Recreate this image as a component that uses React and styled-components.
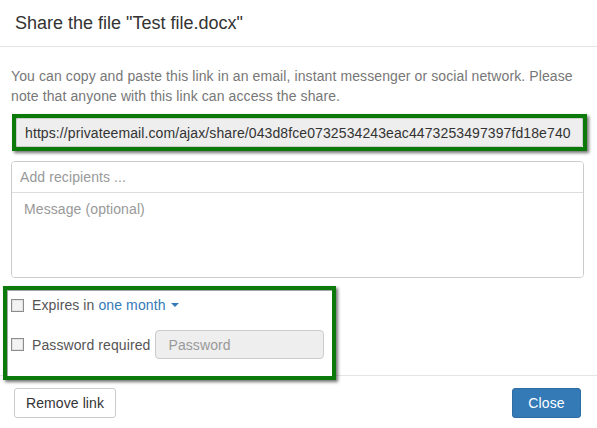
import styled, { createGlobalStyle } from 'styled-components'

const GlobalStyle = createGlobalStyle`
    html, body {
        margin: 0;
        padding: 0;
        background: #fff;
    }
    body {
        font-family: "Liberation Sans", Arial, sans-serif;
        font-size: 14px;
        color: #333;
    }
    * { box-sizing: border-box; }
`

const Modal = styled.div`
    width: 597px;
    height: 428px;
    background: #fff;
    overflow: hidden;
`

const Header = styled.div`
    padding: 10px 15px;
    border-bottom: 1px solid #e5e5e5;
`

const Title = styled.h4`
    margin: 0;
    font-size: 18px;
    font-weight: normal;
    line-height: 26px;
    color: #333;
`

const Body = styled.div`
    padding: 19px 13px 0 11px;
`

const Hint = styled.p`
    margin: 0 0 8px;
    font-size: 14px;
    line-height: 20px;
    letter-spacing: 0.1px;
    color: #777;
`

const Highlight = styled.div`
    position: relative;
    z-index: 1;
    background: #fff;
    border: 4px solid #0b7a0b;
    box-shadow: inset 1px 1px 0 rgba(0, 0, 0, 0.35), 2px 2px 3px rgba(0, 0, 0, 0.55);
    width: ${props => props.$width};
    margin: ${props => props.$margin};
    padding: ${props => props.$padding};
`

const LinkField = styled.input`
    display: block;
    width: 100%;
    height: 29px;
    padding: 0 8px;
    font: inherit;
    font-size: 14px;
    letter-spacing: 0.1px;
    color: #333;
    background: #eee;
    border: 1px solid #ccc;
    border-radius: 2px;
    outline: none;
`

const Recipients = styled.div`
    margin-top: 10px;
    width: 573px;
    border: 1px solid #ccc;
    border-radius: 4px;
    overflow: hidden;
`

const RecipientInput = styled.input`
    display: block;
    width: 100%;
    height: 31px;
    padding: 0 8px;
    border: none;
    border-bottom: 1px solid #ddd;
    font: inherit;
    font-size: 14px;
    letter-spacing: 0.1px;
    outline: none;
    &::placeholder { color: #999; }
`

const Message = styled.textarea`
    display: block;
    width: 100%;
    height: 84px;
    padding: 8px 12px;
    border: none;
    resize: none;
    font: inherit;
    font-size: 14px;
    letter-spacing: 0.1px;
    outline: none;
    &::placeholder { color: #999; }
`

const OptionRow = styled.div`
    display: flex;
    align-items: center;
    height: ${props => props.$height};
    margin-bottom: ${props => props.$gap || 0};
`

const Check = styled.input.attrs({ type: 'checkbox' })`
    appearance: none;
    margin: 0 8px 0 0;
    width: 13px;
    height: 13px;
    border: 1px solid #8c8c8c;
    background: #f3f3f3;
    box-shadow: inset 0 0 0 1px #e2e2e2;
    flex: none;
`

const Label = styled.span`
    font-size: 14px;
    letter-spacing: 0.1px;
    color: #555;
    white-space: nowrap;
`

const DropLink = styled.span`
    color: #337ab7;
    margin-left: 4px;
    display: inline-flex;
    align-items: center;
    letter-spacing: 0.1px;
    white-space: nowrap;
`

const Caret = styled.span`
    display: inline-block;
    margin-left: 5px;
    width: 0;
    height: 0;
    border-top: 4px solid #337ab7;
    border-left: 4px solid transparent;
    border-right: 4px solid transparent;
`

const PasswordField = styled.input`
    margin-left: 5px;
    width: 169px;
    height: 29px;
    padding: 0 12px;
    background: #eee;
    border: 1px solid #ccc;
    border-radius: 4px;
    font: inherit;
    font-size: 14px;
    letter-spacing: 0.1px;
    outline: none;
    &::placeholder { color: #999; }
`

const Footer = styled.div`
    display: flex;
    justify-content: space-between;
    align-items: center;
    padding: 12px 16px 0 14px;
    border-top: 1px solid #e5e5e5;
`

const Button = styled.button`
    height: 30px;
    padding: 0;
    font: inherit;
    font-size: 14px;
    letter-spacing: 0.1px;
    white-space: nowrap;
    border-radius: 3px;
    border: 1px solid ${props => props.$primary ? '#2e6da4' : '#ccc'};
    background: ${props => props.$primary ? '#337ab7' : '#fff'};
    color: ${props => props.$primary ? '#fff' : '#333'};
    width: ${props => props.$width};
`

export default function App() {
    return (
        <>
            <GlobalStyle />
            <Modal>
                <Header>
                    <Title>Share the file "Test file.docx"</Title>
                </Header>
                <Body>
                    <Hint>
                        You can copy and paste this link in an email, instant messenger or social network. Please note that anyone with this link can access the share.
                    </Hint>
                    <Highlight $width="575px" $margin="0 0 0 1px" $padding="0">
                        <LinkField readOnly value="https://privateemail.com/ajax/share/043d8fce0732534243eac4473253497397fd18e740" />
                    </Highlight>
                    <Recipients>
                        <RecipientInput placeholder="Add recipients ..." />
                        <Message placeholder="Message (optional)" />
                    </Recipients>
                    <Highlight $width="333px" $margin="8px 0 -5px -8px" $padding="0 0 17px 4px">
                        <OptionRow $height="30px" $gap="10px">
                            <Check />
                            <Label>Expires in</Label>
                            <DropLink>one month<Caret /></DropLink>
                        </OptionRow>
                        <OptionRow $height="29px">
                            <Check />
                            <Label>Password required</Label>
                            <PasswordField placeholder="Password" disabled />
                        </OptionRow>
                    </Highlight>
                </Body>
                <Footer>
                    <Button $width="102px">Remove link</Button>
                    <Button $primary $width="69px">Close</Button>
                </Footer>
            </Modal>
        </>
    )
}
